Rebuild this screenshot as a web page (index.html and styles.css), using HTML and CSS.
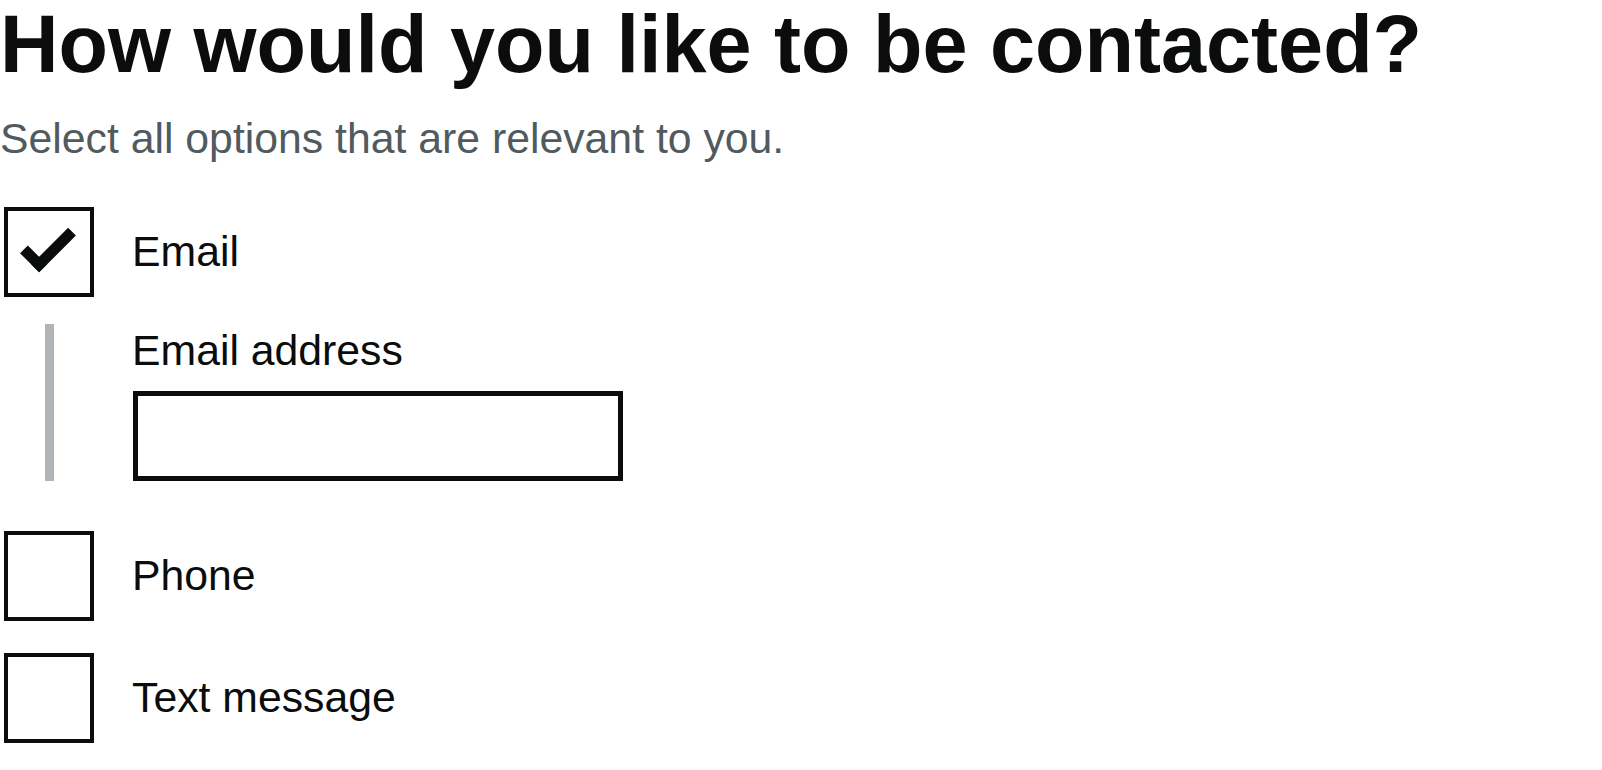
FILE: index.html
```html
<!DOCTYPE html>
<html lang="en">
<head>
<meta charset="utf-8">
<title>How would you like to be contacted?</title>
<link rel="stylesheet" href="styles.css">
</head>
<body>
<form class="form">
  <fieldset class="fieldset">
    <legend class="legend"><h1 class="heading">How would you like to be contacted?</h1></legend>
    <div class="hint">Select all options that are relevant to you.</div>
    <div class="checkboxes">
      <label class="item item-email">
        <span class="box is-checked"></span>
        <span class="label">Email</span>
      </label>
      <div class="conditional">
        <label class="field-label" for="email">Email address</label>
        <input class="input" id="email" type="email">
      </div>
      <label class="item item-phone">
        <span class="box"></span>
        <span class="label">Phone</span>
      </label>
      <label class="item item-text">
        <span class="box"></span>
        <span class="label">Text message</span>
      </label>
    </div>
  </fieldset>
</form>
</body>
</html>
```
FILE: styles.css
```css
html, body {
  margin: 0;
  padding: 0;
  background: #ffffff;
}
body {
  font-family: "Liberation Sans", Arial, sans-serif;
  color: #0b0c0c;
}
.form { margin: 0; }
.fieldset {
  margin: 0;
  padding: 0;
  border: 0;
  min-width: 0;
}
.legend {
  padding: 0;
  display: block;
}
.heading {
  margin: 0;
  font-size: 81px;
  line-height: 88px;
  font-weight: 700;
  color: #0b0c0c;
}
.hint {
  margin-top: 22px;
  font-size: 42.75px;
  line-height: 56px;
  color: #505a5f;
}
.checkboxes {
  display: flex;
  flex-direction: column;
  margin-top: 41px;
}
.item {
  display: flex;
  align-items: center;
  height: 90px;
  cursor: pointer;
}
.item-phone { margin-top: 50px; }
.item-text { margin-top: 32px; }
.box {
  position: relative;
  box-sizing: border-box;
  flex: 0 0 90px;
  width: 90px;
  height: 90px;
  margin-left: 4px;
  border: 4.5px solid #0b0c0c;
  background: #ffffff;
}
.box.is-checked::after {
  content: "";
  box-sizing: border-box;
  position: absolute;
  top: 19.5px;
  left: 14px;
  width: 51.75px;
  height: 27px;
  border-style: solid;
  border-color: #0b0c0c;
  border-width: 0 0 11.25px 11.25px;
  border-top-color: transparent;
  transform: rotate(-45deg);
}
.label {
  margin-left: 38px;
  font-size: 42.75px;
  line-height: 56px;
  margin-top: -3px;
}
.conditional {
  margin-top: 27px;
  margin-left: 45px;
  border-left: 9px solid #b1b4b6;
  padding-left: 78px;
  display: flex;
  flex-direction: column;
  align-items: flex-start;
}
.field-label {
  display: block;
  font-size: 42.75px;
  line-height: 52px;
  margin-bottom: 15px;
}
.input {
  box-sizing: border-box;
  width: 490px;
  height: 90px;
  margin: 0 0 0 1px;
  padding: 11px;
  border: 5px solid #0b0c0c;
  border-radius: 0;
  font-family: "Liberation Sans", Arial, sans-serif;
  font-size: 42.75px;
  background: #ffffff;
  outline: none;
  -webkit-appearance: none;
  appearance: none;
}
```
